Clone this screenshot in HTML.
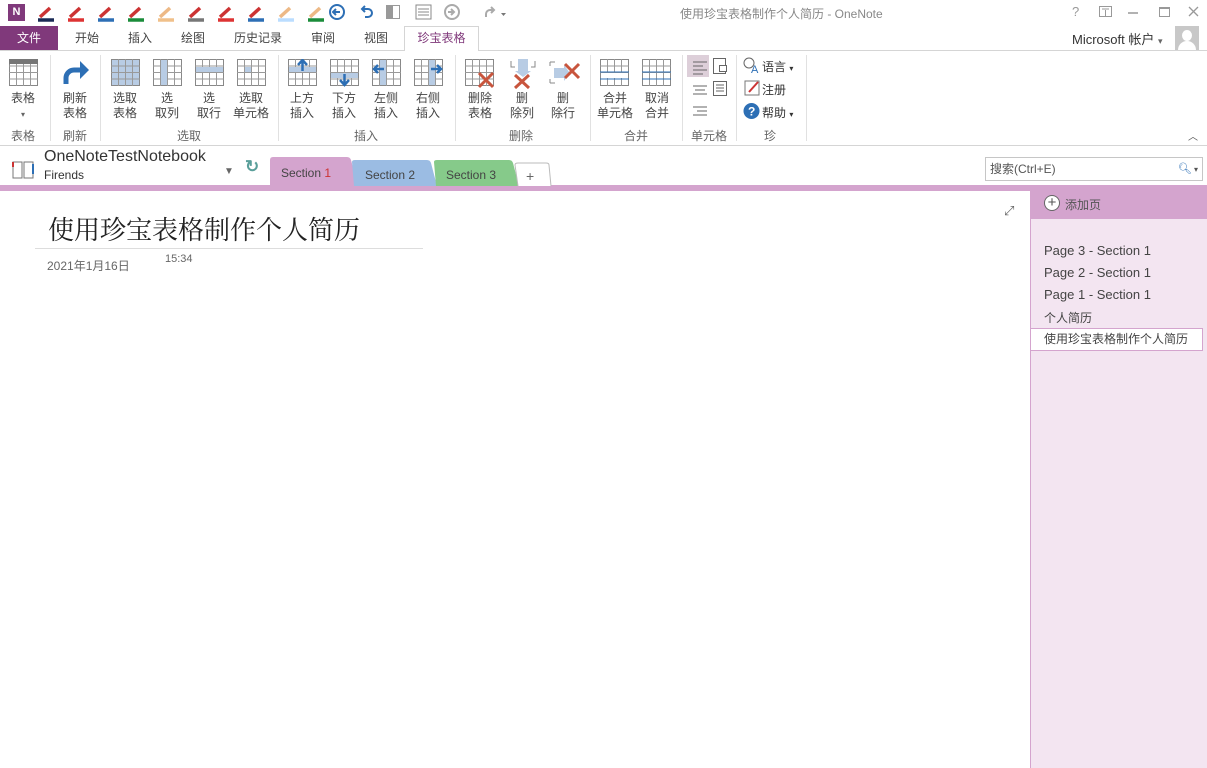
<!DOCTYPE html>
<html><head><meta charset="utf-8"><style>
*{margin:0;padding:0;box-sizing:border-box}
body{width:1207px;height:768px;overflow:hidden;background:#fff;font-family:"Liberation Sans","Noto Sans CJK SC",sans-serif;font-size:12px;color:#444;position:relative}
.a{position:absolute;white-space:nowrap}
.tab{position:absolute;top:26px;height:24px;line-height:24px;font-size:12px;color:#444}
.lbl{position:absolute;text-align:center;font-size:12px;line-height:15px;color:#444;width:50px}
.gl{position:absolute;top:127px;font-size:12px;color:#666;text-align:center;width:60px}
.sep{position:absolute;top:55px;width:1px;height:86px;background:#e1e1e1}
.ic{position:absolute;top:59px}
.pg{position:absolute;left:1044px;font-size:13px;color:#444}
</style></head><body>
<svg width="0" height="0" style="position:absolute"><defs>
<g id="grid"><rect x="0.5" y="0.5" width="28" height="26" fill="#fff" stroke="#888"/><path d="M0 7h29M0 13.5h29M0 20h29M7.5 0v27M14.5 0v27M21.5 0v27" stroke="#999" stroke-width="1"/></g>
</defs></svg>
<div class="a" style="left:8px;top:4px;width:17px;height:17px;background:#80397B;color:#fff;font-size:11px;font-weight:bold;line-height:17px;text-align:center">N</div>
<svg class="a" style="left:36px;top:4px" width="290" height="18">
<g stroke-width="3.5"><path d="M4 13l10-9" stroke="#c33"/><path d="M2 16h16" stroke="#1a2a55"/>
<path d="M34 13l10-9" stroke="#c33"/><path d="M32 16h16" stroke="#d33"/>
<path d="M64 13l10-9" stroke="#c33"/><path d="M62 16h16" stroke="#2d6fb5"/>
<path d="M94 13l10-9" stroke="#c33"/><path d="M92 16h16" stroke="#1a8c3a"/>
<path d="M124 13l10-9" stroke="#edb986"/><path d="M122 16h16" stroke="#f0c08a"/>
<path d="M154 13l10-9" stroke="#c33"/><path d="M152 16h16" stroke="#777"/>
<path d="M184 13l10-9" stroke="#c33"/><path d="M182 16h16" stroke="#d33"/>
<path d="M214 13l10-9" stroke="#c33"/><path d="M212 16h16" stroke="#2d6fb5"/>
<path d="M244 13l10-9" stroke="#edb986"/><path d="M242 16h16" stroke="#bdf"/>
<path d="M274 13l10-9" stroke="#edb986"/><path d="M272 16h16" stroke="#1a8c3a"/></g></svg>
<svg class="a" style="left:326px;top:3px" width="190" height="20">
<circle cx="11" cy="9" r="7" fill="none" stroke="#2d6fb5" stroke-width="2"/><path d="M14 9H8M10 6l-3 3 3 3" stroke="#2d6fb5" stroke-width="2" fill="none"/>
<path d="M36 6h6a4 4 0 0 1 0 8h-3M39 3l-3 3 3 3" stroke="#2d6fb5" stroke-width="2" fill="none"/>
<rect x="60" y="2" width="14" height="14" fill="#999"/><rect x="67" y="3" width="6" height="12" fill="#fff"/>
<rect x="90" y="2" width="15" height="14" fill="none" stroke="#888"/><path d="M92 6h11M92 9h11M92 12h11" stroke="#888"/>
<circle cx="126" cy="9" r="7" fill="none" stroke="#aaa" stroke-width="2"/><path d="M122 9h6M125 6l3 3-3 3" stroke="#aaa" stroke-width="2" fill="none"/>
<path d="M160 14v-3a4 4 0 0 1 4-4h4M165 4l3 3-3 3" stroke="#aaa" stroke-width="2" fill="none"/>
<path d="M175 10h5l-2.5 3z" fill="#777"/></svg>
<div class="a" style="left:680px;top:5px;font-size:12px;color:#888">使用珍宝表格制作个人简历 - OneNote</div>
<div class="a" style="left:1072px;top:4px;font-size:13px;color:#999">?</div>
<svg class="a" style="left:1098px;top:5px" width="110" height="14"><rect x="1.5" y="1.5" width="12" height="10" fill="none" stroke="#999"/><path d="M4 4h7M7.5 5v6" stroke="#999"/><path d="M30 8h10" stroke="#999" stroke-width="1.5"/><rect x="61.5" y="2.5" width="10" height="9" fill="none" stroke="#999"/><path d="M61 3h11" stroke="#999" stroke-width="2"/><path d="M91 2l9 9M100 2l-9 9" stroke="#999" stroke-width="1.3"/></svg>
<div class="a" style="left:0;top:26px;width:58px;height:24px;background:#80397B;color:#fff;line-height:24px;text-align:center">文件</div>
<div class="tab" style="left:75px">开始</div>
<div class="tab" style="left:128px">插入</div>
<div class="tab" style="left:181px">绘图</div>
<div class="tab" style="left:234px">历史记录</div>
<div class="tab" style="left:311px">审阅</div>
<div class="tab" style="left:364px">视图</div>
<div class="a" style="left:404px;top:26px;width:75px;height:25px;border:1px solid #d5d5d5;border-bottom:none;background:#fff;color:#80397B;line-height:22px;text-align:center">珍宝表格</div>
<div class="a" style="left:0;top:50px;width:404px;height:1px;background:#d5d5d5"></div>
<div class="a" style="left:479px;top:50px;width:728px;height:1px;background:#d5d5d5"></div>
<div class="a" style="left:1072px;top:29px;font-size:13px;color:#333">Microsoft 帐户 <span style="font-size:9px;color:#666">▾</span></div>
<div class="a" style="left:1175px;top:26px;width:24px;height:24px;background:#c8c8c8;overflow:hidden"><div style="position:absolute;left:7px;top:4px;width:10px;height:11px;border-radius:50%;background:#fff"></div><div style="position:absolute;left:3px;top:15px;width:18px;height:14px;border-radius:9px 9px 0 0;background:#fff"></div></div>
<div class="a" style="left:0;top:145px;width:1207px;height:1px;background:#d5d5d5"></div>
<div class="sep" style="left:50px"></div><div class="sep" style="left:100px"></div><div class="sep" style="left:278px"></div><div class="sep" style="left:455px"></div><div class="sep" style="left:590px"></div><div class="sep" style="left:682px"></div><div class="sep" style="left:736px"></div><div class="sep" style="left:806px"></div>
<svg class="ic" style="left:9px" width="30" height="28"><use href="#grid"/><rect x="0" y="0" width="29" height="5" fill="#777"/></svg>
<svg class="ic" style="left:60px;top:58px" width="30" height="30"><path d="M6 26v-6a8 8 0 0 1 8-8h10" stroke="#2d6fb5" stroke-width="5" fill="none"/><path d="M20 3l9 9-9 9z" fill="#2d6fb5"/></svg>
<svg class="ic" style="left:111px" width="30" height="28"><rect x="0.5" y="0.5" width="28" height="26" fill="#b8cce4" stroke="#888"/><path d="M0 7h29M0 13.5h29M0 20h29M7.5 0v27M14.5 0v27M21.5 0v27" stroke="#999"/></svg>
<svg class="ic" style="left:153px" width="30" height="28"><use href="#grid"/><rect x="8" y="1" width="6" height="25" fill="#b8cce4"/></svg>
<svg class="ic" style="left:195px" width="30" height="28"><use href="#grid"/><rect x="1" y="8" width="27" height="5" fill="#b8cce4"/></svg>
<svg class="ic" style="left:237px" width="30" height="28"><use href="#grid"/><rect x="8" y="8" width="6" height="5" fill="#b8cce4"/></svg>
<svg class="ic" style="left:288px" width="30" height="28"><use href="#grid"/><rect x="1" y="8" width="27" height="5" fill="#b8cce4"/><path d="M14.5 12V2M10 6l4.5-5 4.5 5" stroke="#2d6fb5" stroke-width="2.5" fill="none"/></svg>
<svg class="ic" style="left:330px" width="30" height="28"><use href="#grid"/><rect x="1" y="14" width="27" height="5" fill="#b8cce4"/><path d="M14.5 15v10M10 21l4.5 5 4.5-5" stroke="#2d6fb5" stroke-width="2.5" fill="none"/></svg>
<svg class="ic" style="left:372px" width="30" height="28"><use href="#grid"/><rect x="8" y="1" width="6" height="25" fill="#b8cce4"/><path d="M12 10H2M6 6l-4 4 4 4" stroke="#2d6fb5" stroke-width="2.5" fill="none"/></svg>
<svg class="ic" style="left:414px" width="30" height="28"><use href="#grid"/><rect x="15" y="1" width="6" height="25" fill="#b8cce4"/><path d="M17 10h10M23 6l4 4-4 4" stroke="#2d6fb5" stroke-width="2.5" fill="none"/></svg>
<svg class="ic" style="left:465px" width="32" height="30"><use href="#grid"/><path d="M14 14l14 14M28 14L14 28" stroke="#c8553d" stroke-width="3"/></svg>
<svg class="ic" style="left:509px" width="30" height="30"><path d="M2 2v6h4M26 2v6h-4" stroke="#888" fill="none"/><rect x="9" y="0" width="10" height="12" fill="#b8cce4"/><path d="M6 12h16l-8 6z" fill="#b8cce4"/><path d="M6 16l14 13M20 16L6 29" stroke="#c8553d" stroke-width="3"/></svg>
<svg class="ic" style="left:548px" width="34" height="28"><path d="M2 3h5M2 24h5M2 3v4M2 24v-4" stroke="#888" fill="none"/><rect x="6" y="9" width="10" height="10" fill="#b8cce4"/><path d="M16 6l6 8-6 8z" fill="#b8cce4"/><path d="M17 5l14 14M31 5L17 19" stroke="#c8553d" stroke-width="3"/></svg>
<svg class="ic" style="left:600px" width="30" height="28"><use href="#grid"/><rect x="1" y="14" width="27" height="5" fill="#fff"/><path d="M0 20h29M0 13h29" stroke="#2d6fb5"/></svg>
<svg class="ic" style="left:642px" width="30" height="28"><use href="#grid"/><path d="M0 13h29M0 20h29" stroke="#2d6fb5"/></svg>
<div class="a" style="left:687px;top:55px;width:22px;height:22px;background:#ddcfd9"></div>
<svg class="a" style="left:690px;top:58px" width="50" height="60"><path d="M3 4h14M3 8h10M3 12h14M3 16h10" stroke="#666"/><path d="M3 28h14M5 32h10M3 36h14" stroke="#666"/><path d="M3 49h14M7 53h10M3 57h14" stroke="#666"/><rect x="23.5" y="0.5" width="12" height="15" fill="#fff" stroke="#666"/><rect x="29.5" y="7.5" width="7" height="6" fill="#fff" stroke="#666"/><rect x="23.5" y="23.5" width="13" height="14" fill="#fff" stroke="#666"/><path d="M26 27h8M26 30h8M26 33h8" stroke="#666"/></svg>
<svg class="a" style="left:743px;top:57px" width="20" height="62"><circle cx="6" cy="6" r="5" fill="none" stroke="#666"/><text x="8" y="16" font-size="11" fill="#2d6fb5" font-family="Liberation Sans">A</text><rect x="2" y="24" width="14" height="14" fill="#fff" stroke="#777"/><path d="M6 35l9-10" stroke="#c33" stroke-width="2"/><circle cx="8.5" cy="54" r="8" fill="#2d6fb5"/><text x="5" y="58.5" font-size="12" font-weight="bold" fill="#fff" font-family="Liberation Sans">?</text></svg>
<div class="a" style="left:762px;top:58px;color:#333">语言 <span style="font-size:8px">▾</span></div>
<div class="a" style="left:762px;top:81px;color:#333">注册</div>
<div class="a" style="left:762px;top:104px;color:#333">帮助 <span style="font-size:8px">▾</span></div>
<div class="lbl" style="left:-2px;top:91px">表格<br><span style="font-size:8px;color:#666">▾</span></div>
<div class="lbl" style="left:50px;top:91px">刷新<br>表格</div>
<div class="lbl" style="left:100px;top:91px">选取<br>表格</div>
<div class="lbl" style="left:142px;top:91px">选<br>取列</div>
<div class="lbl" style="left:184px;top:91px">选<br>取行</div>
<div class="lbl" style="left:226px;top:91px">选取<br>单元格</div>
<div class="lbl" style="left:277px;top:91px">上方<br>插入</div>
<div class="lbl" style="left:319px;top:91px">下方<br>插入</div>
<div class="lbl" style="left:361px;top:91px">左侧<br>插入</div>
<div class="lbl" style="left:403px;top:91px">右侧<br>插入</div>
<div class="lbl" style="left:455px;top:91px">删除<br>表格</div>
<div class="lbl" style="left:497px;top:91px">删<br>除列</div>
<div class="lbl" style="left:538px;top:91px">删<br>除行</div>
<div class="lbl" style="left:590px;top:91px">合并<br>单元格</div>
<div class="lbl" style="left:632px;top:91px">取消<br>合并</div>
<div class="gl" style="left:-7px">表格</div><div class="gl" style="left:45px">刷新</div><div class="gl" style="left:159px">选取</div><div class="gl" style="left:336px">插入</div><div class="gl" style="left:491px">删除</div><div class="gl" style="left:606px">合并</div><div class="gl" style="left:679px">单元格</div><div class="gl" style="left:740px">珍</div>
<div class="a" style="left:1188px;top:128px;font-size:10px;color:#555">︿</div>
<svg class="a" style="left:12px;top:160px" width="24" height="20"><path d="M1 2h9v16H1zM12 2h9v16h-9z" fill="#fff" stroke="#777"/><path d="M1 2v5" stroke="#c33" stroke-width="2"/><path d="M21 4v10" stroke="#2d6fb5" stroke-width="2"/></svg>
<div class="a" style="left:44px;top:148px;font-size:16px;color:#333">OneNoteTestNotebook</div>
<div class="a" style="left:44px;top:168px;font-size:12px;color:#333">Firends</div>
<div class="a" style="left:224px;top:166px;font-size:10px;color:#666">▼</div>
<div class="a" style="left:245px;top:157px;font-size:17px;color:#5a9f9a;font-weight:bold">↻</div>
<div class="a" style="left:0;top:185px;width:1207px;height:6px;background:#D4A4CE"></div>
<svg class="a" style="left:268px;top:155px" width="290" height="31">
<path d="M2 31V5q0-3 3-3h74q3 0 4 3l7 26z" fill="#D4A4CE"/>
<path d="M86 31l-2-24q0-2 3-2h72q3 0 4 3l6 23z" fill="#9BBCE3"/>
<path d="M168 31l-2-24q0-2 3-2h72q3 0 4 3l6 23z" fill="#86CA8A"/>
<path d="M250 31l-3-21q0-2 3-2h28q3 0 3 2l2 21" fill="#fff" stroke="#bbb"/>
<text x="13" y="22" font-size="12" fill="#444" font-family="Liberation Sans">Section <tspan fill="#c33">1</tspan></text>
<text x="97" y="24" font-size="12" fill="#444" font-family="Liberation Sans">Section 2</text>
<text x="178" y="24" font-size="12" fill="#444" font-family="Liberation Sans">Section 3</text>
<text x="258" y="26" font-size="14" fill="#666" font-family="Liberation Sans">+</text></svg>
<div class="a" style="left:985px;top:157px;width:218px;height:24px;border:1px solid #c6c6c6;background:#fff;padding-left:4px;line-height:22px;color:#555">搜索(Ctrl+E)<span style="position:absolute;right:4px;color:#2d6fb5;font-size:11px">🔍︎<span style="color:#555;font-size:8px"> ▾</span></span></div>
<div class="a" style="left:48px;top:210px;font-size:26px;color:#222;font-family:'Noto Serif CJK SC','Noto Sans CJK SC',serif">使用珍宝表格制作个人简历</div>
<div class="a" style="left:35px;top:248px;width:388px;height:1px;background:#ddd"></div>
<div class="a" style="left:47px;top:257px;font-size:12px;color:#666">2021年1月16日</div>
<div class="a" style="left:165px;top:253px;font-size:11px;color:#666">15:34</div>
<div class="a" style="left:1004px;top:203px;font-size:13px;color:#666">⤢</div>
<div class="a" style="left:1030px;top:191px;width:177px;height:577px;background:#F3E5F1;border-left:1px solid #D4A4CE"></div>
<div class="a" style="left:1030px;top:191px;width:177px;height:28px;background:#D4A4CE"></div>
<div class="a" style="left:1044px;top:195px;width:16px;height:16px;border-radius:50%;background:#fff;border:1px solid #666;text-align:center;line-height:13px;font-size:15px;color:#555">+</div>
<div class="a" style="left:1065px;top:196px;font-size:12px;color:#555">添加页</div>
<div class="pg" style="top:243px">Page 3 - Section 1</div>
<div class="pg" style="top:265px">Page 2 - Section 1</div>
<div class="pg" style="top:287px">Page 1 - Section 1</div>
<div class="pg" style="top:309px;font-size:12px">个人简历</div>
<div class="a" style="left:1030px;top:328px;width:173px;height:23px;background:#fff;border:1px solid #D4A4CE;padding-left:13px;line-height:21px;font-size:12px;color:#444">使用珍宝表格制作个人简历</div>
</body></html>
